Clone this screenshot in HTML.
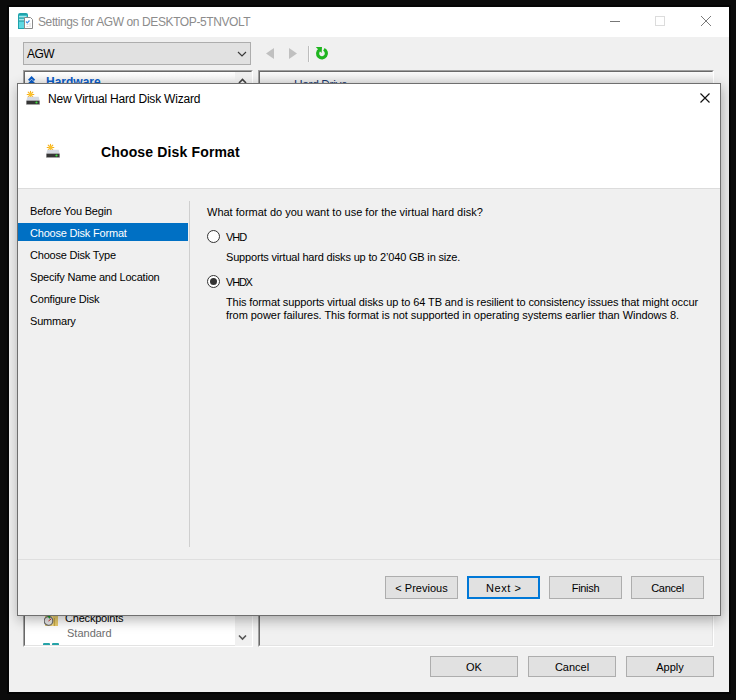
<!DOCTYPE html>
<html><head><meta charset="utf-8">
<style>
*{margin:0;padding:0;box-sizing:border-box}
html,body{width:736px;height:700px;overflow:hidden;background:#0b0b0b}
body{position:relative;font-family:"Liberation Sans",sans-serif;color:#000}
.a{position:absolute}
.t11{position:absolute;font-size:11px;line-height:13px;white-space:nowrap}
.t12{position:absolute;font-size:12px;line-height:14px;white-space:nowrap}
.btn{position:absolute;background:#e1e1e1;border:1px solid #adadad;font-size:11px;line-height:13px;text-align:center;white-space:nowrap}
</style></head><body>
<!-- outer window -->
<div class="a" style="left:7px;top:5px;width:724px;height:689px;background:#050505"></div>
<div class="a" style="left:9px;top:7px;width:720px;height:685px;background:#f0f0f0"></div>
<div class="a" style="left:9px;top:7px;width:720px;height:30px;background:#fff"></div>
<div class="t12" style="left:38px;top:15px;color:#8c8c8c;letter-spacing:-0.4px">Settings for AGW on DESKTOP-5TNVOLT</div>
<!-- window controls -->
<div class="a" style="left:610px;top:21px;width:10px;height:1px;background:#777"></div>
<div class="a" style="left:655px;top:16px;width:10px;height:10px;border:1px solid #dcdcdc"></div>
<svg class="a" style="left:700px;top:15px" width="12" height="12" viewBox="0 0 12 12"><path d="M1 1L11 11M11 1L1 11" stroke="#7a7a7a" stroke-width="1"/></svg>

<!-- combo -->
<div class="a" style="left:23px;top:42px;width:228px;height:23px;background:#e1e1e1;border:1px solid #adadad"></div>
<div class="t12" style="left:27px;top:47px;letter-spacing:-0.6px">AGW</div>
<svg class="a" style="left:237px;top:51px" width="10" height="7" viewBox="0 0 10 7"><path d="M1 1L5 5L9 1" stroke="#3a3a3a" stroke-width="1.15" fill="none"/></svg>
<!-- nav arrows -->
<svg class="a" style="left:265px;top:48px" width="10" height="11"><path d="M9 0L9 11L1 5.5Z" fill="#c0c0c0"/></svg>
<svg class="a" style="left:288px;top:48px" width="10" height="11"><path d="M1 0L1 11L9 5.5Z" fill="#c0c0c0"/></svg>
<div class="a" style="left:308px;top:46px;width:1px;height:16px;background:#bdbdbd"></div><div class="a" style="left:309px;top:46px;width:1px;height:16px;background:#fafafa"></div>
<svg class="a" style="left:315px;top:47px" width="14" height="13" viewBox="0 0 14 13"><path d="M8.86 2.41A4.4 4.4 0 1 1 4.48 2.8" stroke="#1fb51f" stroke-width="3.2" fill="none"/><path d="M0.8 0L7 0L6.6 6Z" fill="#1fb51f"/></svg>

<!-- tree panel -->
<div class="a" style="left:23px;top:70px;width:230px;height:577px;background:#fff;border-top:1px solid #a0a0a0;border-left:1px solid #a0a0a0;border-right:1px solid #fff;border-bottom:1px solid #fff"></div><div class="a" style="left:24px;top:71px;width:228px;height:575px;border-top:1px solid #696969;border-left:1px solid #696969;border-right:1px solid #e3e3e3;border-bottom:1px solid #e3e3e3"></div>
<div class="a" style="left:25px;top:72px;width:210px;height:12px;background:linear-gradient(#fff,#ececec)"></div>
<div class="a" style="left:235px;top:72px;width:17px;height:574px;background:#f0f0f0"></div>
<svg class="a" style="left:28px;top:76px" width="8" height="8" viewBox="0 0 8 8"><path d="M0.7 4.4L3.6 1.5L6.5 4.4M0.7 7.9L3.6 5L6.5 7.9" stroke="#0a5bc4" stroke-width="2" fill="none"/></svg>
<div class="a" style="left:46px;top:75px;font-size:12px;font-weight:bold;line-height:14px;color:#0a5bc4">Hardware</div>
<svg class="a" style="left:238px;top:78px" width="9" height="7" viewBox="0 0 9 7"><path d="M1 5L4.5 1.5L8 5" stroke="#404040" stroke-width="1.6" fill="none"/></svg>
<svg class="a" style="left:238px;top:634px" width="9" height="7" viewBox="0 0 9 7"><path d="M1 1.5L4.5 5L8 1.5" stroke="#555" stroke-width="1.6" fill="none"/></svg>
<div class="t11" style="left:65px;top:612px;color:#000;letter-spacing:-0.2px">Checkpoints</div>
<div class="t11" style="left:67px;top:627px;color:#6d6d6d">Standard</div>
<svg class="a" style="left:44px;top:615px" width="15" height="12" viewBox="0 0 15 12"><rect x="1" y="0" width="13" height="11" fill="#e9cd6e"/><rect x="10" y="3" width="1" height="8" fill="#c9a844"/><rect x="8" y="0" width="1" height="11" fill="#f3df9c"/><circle cx="4.5" cy="6" r="4.3" fill="#e8e8e8" stroke="#707070" stroke-width="1.2"/><path d="M4.5 6L7 4" stroke="#e02020" stroke-width="1"/><path d="M3 0.5L6.5 0.5L5.5 4Z" fill="#1a9a2a"/></svg>
<div class="a" style="left:43px;top:643px;width:7px;height:2px;background:#26a3a8;border-radius:1px 1px 0 0"></div>
<div class="a" style="left:52px;top:643px;width:7px;height:2px;background:#26a3a8;border-radius:1px 1px 0 0"></div>

<!-- right panel -->
<div class="a" style="left:258px;top:70px;width:456px;height:577px;background:#f0f0f0;border-top:1px solid #a0a0a0;border-left:1px solid #a0a0a0;border-right:1px solid #fff;border-bottom:1px solid #fff"></div><div class="a" style="left:259px;top:71px;width:454px;height:575px;border-top:1px solid #696969;border-left:1px solid #696969;border-right:1px solid #e3e3e3;border-bottom:1px solid #e3e3e3"></div>
<div class="a" style="left:260px;top:72px;width:453px;height:12px;background:linear-gradient(#fafafa,#e4e4e4)"></div>
<div class="a" style="left:294px;top:78px;font-size:12px;line-height:14px;color:#1c3a6e;letter-spacing:-0.4px">Hard Drive</div>

<!-- bottom buttons -->
<div class="btn" style="left:430px;top:656px;width:88px;height:21px;padding-top:4px">OK</div>
<div class="btn" style="left:528px;top:656px;width:88px;height:21px;padding-top:4px">Cancel</div>
<div class="btn" style="left:626px;top:656px;width:88px;height:21px;padding-top:4px">Apply</div>

<!-- wizard shadow -->
<div class="a" style="left:17px;top:83px;width:704px;height:533px;box-shadow:1px 4px 12px rgba(0,0,0,0.30)"></div>
<!-- wizard -->
<div class="a" style="left:17px;top:83px;width:704px;height:533px;background:#f0f0f0;border:1px solid #6f6f6f"></div>
<div class="a" style="left:18px;top:84px;width:702px;height:104px;background:#fff"></div>
<div class="a" style="left:18px;top:188px;width:702px;height:1px;background:#dcdcdc"></div>
<div class="t12" style="left:48px;top:92px;letter-spacing:-0.2px">New Virtual Hard Disk Wizard</div>
<svg class="a" style="left:700px;top:93px" width="10" height="10" viewBox="0 0 10 10"><path d="M0.5 0.5L9.5 9.5M9.5 0.5L0.5 9.5" stroke="#111" stroke-width="1.15"/></svg>
<!-- wizard icon -->
<svg class="a" style="left:26px;top:90px" width="15" height="15" viewBox="0 0 15 15">
<g stroke="#f5b01c" stroke-width="1.1" stroke-linecap="round"><path d="M4.5 1.2V7.8M1.2 4.5H7.8M2.2 2.2L6.8 6.8M6.8 2.2L2.2 6.8"/></g><circle cx="4.5" cy="4.5" r="1.9" fill="#fcc22a"/>
<path d="M1.3 6.8H12.7L13.6 10.6H0.4Z" fill="#d6dae2"/><rect x="0.4" y="10.6" width="13.2" height="4" fill="#353535"/><rect x="0.4" y="14.2" width="13.2" height="0.6" fill="#b8b8b8"/><circle cx="10.5" cy="12.5" r="1.1" fill="#3be23b"/></svg>
<div class="a" style="left:101px;top:144px;font-size:14px;font-weight:bold;line-height:16px;letter-spacing:0.15px">Choose Disk Format</div>
<svg class="a" style="left:46px;top:143px" width="15" height="15" viewBox="0 0 15 15">
<g stroke="#f5b01c" stroke-width="1.1" stroke-linecap="round"><path d="M4.5 1.2V7.8M1.2 4.5H7.8M2.2 2.2L6.8 6.8M6.8 2.2L2.2 6.8"/></g><circle cx="4.5" cy="4.5" r="1.9" fill="#fcc22a"/>
<path d="M1.3 6.8H12.7L13.6 10.6H0.4Z" fill="#d6dae2"/><rect x="0.4" y="10.6" width="13.2" height="4" fill="#353535"/><rect x="0.4" y="14.2" width="13.2" height="0.6" fill="#b8b8b8"/><circle cx="10.5" cy="12.5" r="1.1" fill="#3be23b"/></svg>

<!-- nav -->
<div class="a" style="left:18px;top:223px;width:170px;height:18px;background:#0070c4"></div>
<div class="t11" style="left:30px;top:205px;letter-spacing:-0.2px">Before You Begin</div>
<div class="t11" style="left:30px;top:227px;color:#fff;letter-spacing:-0.2px">Choose Disk Format</div>
<div class="t11" style="left:30px;top:249px;letter-spacing:-0.2px">Choose Disk Type</div>
<div class="t11" style="left:30px;top:271px;letter-spacing:-0.2px">Specify Name and Location</div>
<div class="t11" style="left:30px;top:293px;letter-spacing:-0.2px">Configure Disk</div>
<div class="t11" style="left:30px;top:315px;letter-spacing:-0.2px">Summary</div>
<div class="a" style="left:189px;top:201px;width:1px;height:346px;background:#cfcfcf"></div>

<!-- content -->
<div class="t11" style="left:207px;top:206px">What format do you want to use for the virtual hard disk?</div>
<div class="a" style="left:207px;top:230px;width:13px;height:13px;border:1px solid #333;border-radius:50%;background:#fff"></div>
<div class="t11" style="left:226px;top:231px;letter-spacing:-1px">VHD</div>
<div class="t11" style="left:226px;top:251px;letter-spacing:-0.18px">Supports virtual hard disks up to 2’040 GB in size.</div>
<div class="a" style="left:207px;top:275px;width:13px;height:13px;border:1px solid #333;border-radius:50%;background:#fff"></div>
<div class="a" style="left:210px;top:278px;width:7px;height:7px;border-radius:50%;background:#333"></div>
<div class="t11" style="left:226px;top:276px;letter-spacing:-1.2px">VHDX</div>
<div class="t11" style="left:226px;top:296px;letter-spacing:-0.1px">This format supports virtual disks up to 64 TB and is resilient to consistency issues that might occur</div>
<div class="t11" style="left:226px;top:309px;letter-spacing:-0.05px">from power failures. This format is not supported in operating systems earlier than Windows 8.</div>

<div class="a" style="left:18px;top:559px;width:702px;height:1px;background:#dfdfdf"></div>
<div class="btn" style="left:385px;top:576px;width:73px;height:23px;padding-top:5px">&lt; Previous</div>
<div class="btn" style="left:467px;top:576px;width:73px;height:23px;padding-top:5px;border:2px solid #0078d7;padding-top:4px;letter-spacing:0.6px;text-indent:0.6px">Next &gt;</div>
<div class="btn" style="left:549px;top:576px;width:73px;height:23px;padding-top:5px;letter-spacing:-0.3px">Finish</div>
<div class="btn" style="left:631px;top:576px;width:73px;height:23px;padding-top:5px;letter-spacing:-0.25px">Cancel</div>

<!-- title icon -->
<svg class="a" style="left:18px;top:13px" width="16" height="16" viewBox="0 0 16 16">
<path d="M0 2Q0 0 2 0H8Q10 0 10 2V16H0Z" fill="#1fa3ab"/>
<rect x="1" y="2.5" width="8" height="12.5" fill="#5fd9e3"/>
<rect x="1" y="3.5" width="7" height="1" fill="#e8fbfd"/><rect x="1" y="4.5" width="7" height="1" fill="#1a8f95"/>
<rect x="1" y="6.5" width="7" height="1" fill="#e8fbfd"/><rect x="1" y="7.5" width="7" height="1" fill="#1a8f95"/>
<path d="M6.5 4.5H12.5L14.5 6.5V15.5H6.5Z" fill="#fff" stroke="#8a8a8a"/>
<path d="M8 8.5L9.3 9.8L11.5 7.5" stroke="#3a8ee6" stroke-width="1.2" fill="none"/>
<path d="M8.5 11.5H10.5M8.5 13.5H10.5M12 10V14" stroke="#d0d0d0" stroke-width="0.8"/>
</svg>
</body></html>
